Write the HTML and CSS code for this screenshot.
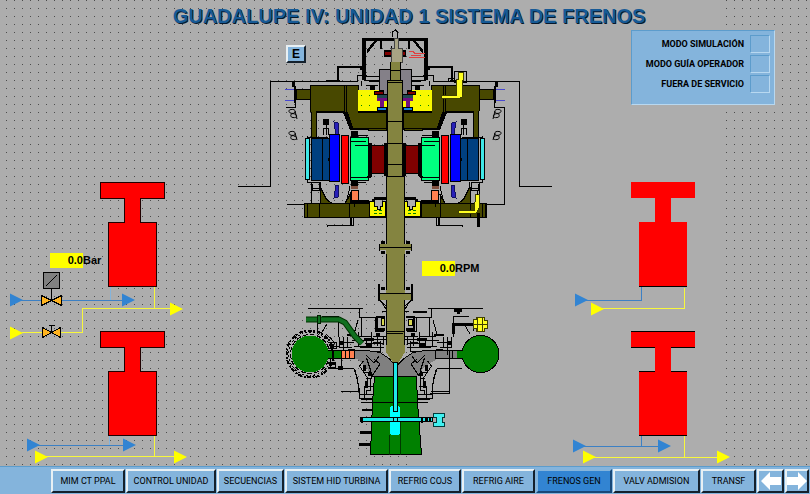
FILE: index.html
```html
<!DOCTYPE html>
<html lang="es">
<head>
<meta charset="utf-8">
<title>Guadalupe IV: Sistema de frenos</title>
<link rel="stylesheet" href="styles.css">
</head>
<body>
<main class="canvas">
  <svg class="mimic" viewBox="0 0 810 466" shape-rendering="crispEdges" aria-hidden="true">
    <defs>
      <pattern id="dots" width="8" height="8" patternUnits="userSpaceOnUse">
        <rect x="6" width="1" height="1" fill="#4c4c4c"/>
      </pattern>

      <!-- Left half of the generator; mirrored for the right half -->
      <g id="generator">
        <path class="thin" d="M238 186.500h32.500v-105h75M337 81.500h20v-6h10"/>
        <path d="M362 38h34v3h-30v39h-4zM337 66h25v4h-2v-2h-21v13h-2zM326 80h14v2h-14zM377 41l-10 13v-4l7-9z"/>
        <path d="M380 41h2v8h-2zM384 50h8v7h-8z"/>
        <path fill="#800000" d="M385 52h6v3h-6z"/>
        <path class="thin" d="M362 76.500h17v4h-15M391.500 46v15M361 81v5M369 81.500h10v8M366 85.500h12"/>
        <path d="M370 86h5v4h-5z"/>
        <path class="body" d="M296.500 89.500h14v10h-14zM310.500 85.500h48v26h28v17h-36l-6-16h-28v25h-5z"/>
        <path class="thin" d="M344.500 85v27M346.500 85v27M316 111.500h27l7 17M316.500 112v26"/>
        <path d="M345 112h3l5 16h34v2h-37z"/>
        <path class="body" stroke="none" d="M368 128h18v2h-18z"/>
        <path fill="#f8f800" d="M358 90h30v21h-30z"/>
        <path d="M358 111h30v2h-30zM292 82h3v5h-3zM294 86h2v17h-2z"/>
        <path fill="#008000" d="M361 95h1v1h-1zM369 95h1v1h-1zM361 105h1v1h-1zM369 105h1v1h-1z"/>
        <path class="violet" d="M285 89.500h9M285 100.500h9"/>
        <path class="thin" d="M295.500 102v5h-10"/>
        <path fill="#800000" stroke="#000" d="M374.500 91.500h13v3h-13z"/>
        <path fill="#204850" d="M377 95h10v3h-10z"/>
        <path fill="#701080" d="M377 98h10v3h-3v6h-4v-6h-3z"/>
        <path fill="#1080e0" stroke="#000" d="M377.500 107.500h9v3h-9z"/>
        <path d="M323 119h6v6h-6zM326 125h1v10h-1z"/>
        <path class="thin" d="M323.500 135v-7h5v7"/>
        <path class="fin" d="M334 122l4 1 1 12h-3zM334 198l4-1 1-12h-3z"/>
        <path class="thin" shape-rendering="auto" d="M291 109.500c5-1 6 4 1 4 6 0 6 5 1 4-3 0-3-4 0-4-5 0-5-4-2-4zM291 131.500c5-1 6 4 1 4 6 0 6 5 1 4-3 0-3-4 0-4-5 0-5-4-2-4zM295 111l2 8M295 133l2 7"/>
        <path class="thin" d="M307.500 136v46h10M308 137.500h20"/>
        <path fill="#40e8e8" stroke="#000" d="M305.500 138.500h4v41h-4z"/>
        <path fill="#004080" stroke="#000" d="M311.500 138.500h11v42h-11zM322.500 138.500h7v42h-7z"/>
        <path fill="#0000ff" stroke="#000" d="M329.500 134.500h10v47h-10z"/>
        <path fill="#ff0000" stroke="#000" d="M341.500 135.500h7v48h-7z"/>
        <path fill="#00ff80" stroke="#000" d="M350.500 137.500h18v43h-18z"/>
        <path class="thin" d="M350 141.500h16M355 145.500h13M351 177.500h16M352 135.500h16M352 182.500h14"/>
        <path d="M351 131h7v6h-7zM368 143h4v33l-2 2h-3v-2h1zM351 181h7v5h-7z"/>
        <path fill="#800000" stroke="#000" d="M371.500 145.500h14v28h-14z"/>
        <path d="M384 143h3v33h-3zM328 158h2v3h-2z"/>
        <path class="thin" d="M307 182.500h12v8h-7v-7M311 183v21l-6 1M312 188.500h8M350 186l-3 14v4M320 182l1 21"/>
        <path class="body" stroke="none" d="M320 187l6 12 5 4h14l5-9v9h19v14h-65v-14h16z"/>
        <path class="thin" d="M320.500 187l6 12 5 4h14l5-9M304 203.500h46M304 217.500h82M304.500 203v14M307.500 203v14M319.500 203v14M349.500 203v14M287 204.500h17"/>
        <path fill="#805040" d="M351 186h7v3h-7z"/>
        <path fill="#ff8050" stroke="#000" d="M351.500 190.500h7v10h-7z"/>
        <path d="M351 200h18v3h-18zM354 200h1v7h-1zM374 197h12v3h-12zM372 199h3v4h-3z"/>
        <path fill="#f8f800" stroke="#000" d="M369.500 201.500h16v15h-16z"/>
        <path fill="#adadad" stroke="#000" d="M374.500 201v5h3v3h3v-3h2v-5"/>
        <path fill="#008000" d="M374 210h3v1h-3zM374 213h3v1h-3zM379 210h3v1h-3zM379 213h3v1h-3z"/>
        <path d="M350 217h2v8h-2z"/>
        <path class="thin" d="M353.500 218v7h-26v2"/>
      </g>

      <!-- Linework around the runner, left half -->
      <g id="casing">
        <path class="thin" d="M308 308.500h55M359.500 309v8h16M361.500 317v20M378.500 284v16l8 6v10M380.500 300l6 10M382 311.500h5M377 317h-2v14h9M373 336.500h13M368 339.500h18M371.500 332v15M377.500 334v12M380.500 341v10h-9M383.500 337v8M355 336.500h16M358.500 332v14M352 340.500h14v6h-12M360 347.500h24M365 343.500h18M317.500 320v11M327 324l-6 10M322 316.500h16v20M358 320l-4 14M339.500 337v10h12M343.500 337v18M347.500 337v11M342 342.500h12"/>
        <path d="M379 284h1v16h-1zM376 316h9v2h-7v10h7v3h-9zM364 338h10v3h-10zM376 333h4v3h-4zM366 344h5v4h-5zM373 342h8v2h-8zM347 334h10v2h-10zM339 341h4v4h-4zM348 349h7v2h-7z"/>
        <path class="thin" d="M341.500 359v9h-12M341 368l13 1 3 8 2 14h-18M355 370l4 18v10h14M364.500 398v-12h8M363 372.500h8v6h-5M366.500 358l4 12-2 6M363.500 361l-4 5 8 12v8M359 394.500h14M374 359l6 5-8 12M366 355l8 8 5-7M370.500 378v12h-4v5"/>
        <path d="M361 398h12v2h-12zM365 381h3v7h-3zM363 365h3v6h-3zM368 373h4v3h-4z"/>
      </g>
      <g id="brake">
        <path d="M.5 .5h64v16h-24v24h16v64h-48v-64h16v-24h-24z"/>
      </g>
      <path id="arrow" shape-rendering="auto" d="M0-6.500L13 0 0 6.500z"/>
    </defs>

    <path fill="url(#dots)" d="M0 0h410v466h-410zM722 0h88v466h-88z"/>

    <use href="#generator"/>
    <use href="#generator" transform="translate(790 0) scale(-1 1)"/>
    <path class="thin" d="M495 107.500h9.500v97h-20M397.500 38v-6l-2-2-3 2v5"/>
    <path fill="none" stroke="#e04040" d="M409 51.500h4l2 2h10M409 57.500h16M411 55.500h10"/>
    <path class="thin" d="M454.500 71.500h12v11h-12zM448.500 82v-4h6"/>
    <path fill="#ffff20" stroke="#404000" d="M458.500 72.500h5v8h-1v16l-3 2h-18v-3h15v-16h2z"/>
    <path fill="#ffff20" stroke="#404000" d="M475.500 194.500h4v12l-3 7h-18v-3h16z"/>
    <path d="M477 190h1v5h-1zM477 213h3v14h-3z"/>

    <!-- Shaft -->
    <path fill="#848088" stroke="#000" d="M379.500 69.500h32v21h-4v4h-24v-4h-4z"/>
    <path fill="#a8a484" stroke="#444" d="M394 38h4v10h4v14h-11v-14h3z"/>
    <path fill="#848440" d="M390 62h11v18h2v96h2v68h6v6h-6v43h6v7h-6v52l-9 15-10-15v-52h-6v-7h6v-43h-6v-6h6v-68h1v-96h3z"/>
    <path class="thin" d="M390.500 62v18h-3v96h-1.500M400.500 62v18h2v96h2v68M386 176.500h18M386 244v-67M386.500 254v36M404.500 254v36M388 80.500h14M388 82.500h14M390 70.500h10M387 121.500h16M387 143.500h16M387 164.500h16M380 247.500h31M380 293.500h31M386 331.500h18M387 333.500h16M386.500 300v51M404.500 300v51"/>
    <path d="M381 241h4v3h-4zM406 241h4v3h-4zM381 251h4v3h-4zM406 251h4v3h-4zM381 287h4v3h-4zM406 287h4v3h-4z"/>
    <path class="thin" d="M379.500 244v7M411.500 244v7"/>

    <!-- Spiral case and guide vanes -->
    <path fill="#808080" d="M354 350h12l14 2 9 6 7 8 8-8 9-6 12-2h33v8h-19l-14 8-8 11h-44l-8-11-8-7h-3z"/>
    <path fill="#848440" d="M386 345h19v7l-9 15-10-15z"/>
    <use href="#casing"/>
    <use href="#casing" transform="translate(791 0) scale(-1 1)"/>
    <path class="thin" d="M354 350.500h12l14 2 9 6 7 8 8-8 9-6 12-2h33M435.500 350v8h22M449.500 350v43h-20M452.500 350v8M372 376.500h45"/>
    <path fill="#008000" d="M322 351h19v7h-19zM457 351h12v7h-12z"/>
    <path class="thin" d="M322 350.500h20M322 358.500h20M457 350.500h10M457 358.500h10"/>
    <path fill="#ff8050" stroke="#000" d="M341.500 350.500h4v8h-4zM345.500 350.500h4v8h-4zM349.500 350.500h5v8h-5z"/>
    <g fill="none" stroke="#000">
      <circle cx="310" cy="354" r="19.500" stroke-dasharray="5 2"/>
      <circle cx="310" cy="354" r="21.500" stroke-dasharray="2 2"/>
      <circle cx="310" cy="354" r="23.500" stroke-width="2" stroke-dasharray="4 1 2 2"/>
      <path d="M326 334l6 6M330 337l5 7M328 342h8v6h-7M331 346h9M327 361l4 6h5M330 360v8M335 362v5"/>
    </g>
    <path d="M338 366h5v4h-5zM330 344h4v4h-4zM331 362h4v3h-4z"/>
    <circle cx="310" cy="354" r="18.500" fill="#008000"/>
    <circle cx="480.500" cy="354" r="18.500" fill="#008000" stroke="#000"/>
    <path fill="#008000" d="M322 351h10v7h-10zM458 351h10v7h-10z"/>
    <path shape-rendering="auto" fill="none" stroke="#003000" stroke-width="6" d="M306 319.500h33l6 3 10 14 7 7"/>
    <path shape-rendering="auto" fill="none" stroke="#107020" stroke-width="4" d="M306 319.500h33l6 3 10 14 7 7"/>
    <path fill="#107020" stroke="#002000" d="M317.500 315.500h3v8h-3z"/>
    <path fill="#d8d850" stroke="#000" d="M381.500 318.500h3v7h-3zM408.500 319.500h4v6h-4z"/>
    <path d="M452 323h21v3h-18v8h-3zM413 311h14v2h-14zM454 309h8v3h-2v2h-3v-2h-3z"/>
    <path fill="#ffff20" stroke="#404000" d="M473.500 319.500h3v-2h8v3h3v8h-3v3h-8v-3h-3z"/>
    <path fill="none" stroke="#404000" d="M477.500 318v13M482.500 318v13M474 324.500h13"/>

    <!-- Draft tube -->
    <path fill="#008000" stroke="#000" d="M374.500 376.500h42l1 26 4 52h-51l2-52z"/>
    <path fill="none" stroke="#003800" d="M389.500 435v20M400.500 420v35"/>
    <path class="thin" d="M372 402.500h47M361 402.500h12M417 402.500h11"/>
    <path d="M362 409h11v2h-11zM360 431h12v3h-12zM359 443h12v3h-12z"/>
    <rect x="390" y="406" width="10" height="29" rx="3" fill="#00ffff"/>
    <path fill="#20e8e8" stroke="#000" d="M393.500 362.500h4v49h-4zM360.500 417.500h72v4h-72z"/>
    <path fill="#40f0f0" stroke="#003c3c" d="M433.500 413.500h11v4h-2v5h2v4h-11v-4h3v-5h-3z"/>
    <circle cx="395.500" cy="419.500" r="2" fill="#20e8e8" stroke="#000"/>
    <path d="M361 417h2v6h-2zM421 417h2v6h-2zM425 418h3v3h-3zM429 418h2v3h-2z"/>

    <!-- Brake pipework -->
    <g fill="none" stroke="#3c80c4">
      <path d="M20 300.500h104M38 445.500h87M586 300.500h55.500v-14M584 446.500h76M641.500 436v10"/>
      <path stroke="#84b4dc" d="M110.500 287v13M109.500 436v9"/>
    </g>
    <path fill="none" stroke="#f8f83c" d="M22 332.500h60.500v-24h89M154.500 287v21M46 456.500h130M154.500 436v20M602 308.500h82.500v-21M594 457.500h124M684.500 436v21"/>
    <g fill="#3284d2">
      <use href="#arrow" x="10" y="300"/><use href="#arrow" x="122" y="300"/>
      <use href="#arrow" x="27" y="445"/><use href="#arrow" x="123" y="445"/>
      <use href="#arrow" x="575" y="300"/>
      <use href="#arrow" x="573" y="446"/><use href="#arrow" x="658" y="446"/>
    </g>
    <g fill="#ffff00">
      <use href="#arrow" x="10" y="333"/><use href="#arrow" x="170" y="309"/>
      <use href="#arrow" x="35" y="457"/><use href="#arrow" x="174" y="457"/>
      <use href="#arrow" x="591" y="309"/>
      <use href="#arrow" x="583" y="457"/><use href="#arrow" x="717" y="457"/>
    </g>
    <g stroke="#000">
      <path fill="#808080" d="M43.500 272.500h16v16h-16zM46 286l11-11"/>
      <path fill="none" d="M51.500 289v11M51.500 326v6M49 325.500h6"/>
      <path fill="#ffb420" d="M41.500 295.500v10l10-5 10 5v-10l-10 5zM42.500 327.500v10l9-5 9 5v-10l-9 5z"/>
    </g>
    <g fill="#ff0000" stroke="#200000">
      <use href="#brake" x="100" y="182"/>
      <use href="#brake" x="100" y="331"/>
    </g>
    <g fill="#ff0000">
      <use href="#brake" x="630.500" y="181.500"/>
      <use href="#brake" x="630.500" y="331"/>
    </g>
    <path class="thin" d="M639 286.500h48M631 331.500h64M631 347.500h24M671 347.500h24M639 371.500h16M671 371.500h16M639 435.500h48"/>
  </svg>

  <div class="overlay">
    <h1 class="title">GUADALUPE IV: UNIDAD 1 SISTEMA DE FRENOS</h1>
    <div class="top-row">
      <button class="btn btn-e" type="button">E</button>
      <ul class="modes">
        <li>MODO SIMULACIÓN<span class="lamp"></span></li>
        <li>MODO GUÍA OPERADOR<span class="lamp"></span></li>
        <li>FUERA DE SERVICIO<span class="lamp"></span></li>
      </ul>
    </div>
  </div>
  <div class="reading reading-pressure"><output>0.0</output>Bar</div>
  <div class="reading reading-speed"><output>0.0</output>RPM</div>
</main>

<nav class="navbar">
  <button class="btn tab" type="button">MIM CT PPAL</button>
  <button class="btn tab" type="button">CONTROL UNIDAD</button>
  <button class="btn tab" type="button">SECUENCIAS</button>
  <button class="btn tab" type="button">SISTEM HID TURBINA</button>
  <button class="btn tab" type="button">REFRIG COJS</button>
  <button class="btn tab" type="button">REFRIG AIRE</button>
  <button class="btn tab tab-active" type="button" aria-current="page">FRENOS GEN</button>
  <button class="btn tab" type="button">VALV ADMISION</button>
  <button class="btn tab" type="button">TRANSF</button>
  <button class="btn tab" type="button" aria-label="Anterior"><svg class="arrow" viewBox="0 0 20 18"><path d="M0 9L9 0v5h11v8H9v5z"/></svg></button>
  <button class="btn tab" type="button" aria-label="Siguiente"><svg class="arrow" viewBox="0 0 20 18"><path d="M20 9L11 0v5H0v8h11v5z"/></svg></button>
</nav>
</body>
</html>
```
FILE: styles.css
```css
* {
  box-sizing: border-box;
}

body {
  margin: 0;
  min-height: 100vh;
  display: flex;
  flex-direction: column;
  background: #adadad;
  color: #000;
  font-family: "Liberation Sans", Arial, sans-serif;
}

.canvas {
  position: relative;
  display: grid;
  width: 100%;
  aspect-ratio: 810 / 466;
}

.mimic,
.overlay {
  grid-area: 1 / 1;
  width: 100%;
}

.mimic {
  display: block;
  height: 100%;
}

.overlay {
  position: relative;
}

.thin {
  fill: none;
  stroke: #000;
}

.body {
  fill: #484800;
  stroke: #000;
}

.violet {
  fill: none;
  stroke: #4848d0;
}

.fin {
  fill: #2820b8;
  stroke: #101060;
}

.title {
  margin: 0;
  padding: 4px 0 0 8px;
  height: 30px;
  font-size: 20px;
  line-height: 24px;
  text-align: center;
  color: #165a96;
  text-shadow: 1px 1px 0 #06182c;
}

.top-row {
  display: flex;
  justify-content: space-between;
  align-items: flex-start;
  padding: 0 35px 0 35.300%;
}

.btn {
  margin: 0;
  padding: 0;
  border: 2px solid;
  border-color: #e8f0f4 #14202c #14202c #e8f0f4;
  background: #84b4dc;
  color: #000;
  font-family: inherit;
}

.btn-e {
  width: 20px;
  height: 18px;
  margin-top: 15px;
  font-size: 12px;
  font-weight: bold;
  line-height: 14px;
}

.modes {
  margin: 0;
  padding: 3px 4px 10px 14px;
  list-style: none;
  background: #84b4dc;
  border: 1px solid;
  border-color: #5c9ccc #b8d8f0 #b8d8f0 #5c9ccc;
  font-family: Roboto, "Noto Sans", sans-serif;
  font-size: 9px;
  font-weight: bold;
}

.modes li {
  display: flex;
  align-items: center;
  justify-content: flex-end;
  gap: 6px;
  height: 20px;
}

.lamp {
  width: 20px;
  height: 18px;
  border: 1px solid;
  border-color: #5c9ccc #b8d8f0 #b8d8f0 #5c9ccc;
}

.reading {
  position: absolute;
  display: flex;
  align-items: center;
  height: 15px;
  font-size: 11px;
  font-weight: bold;
  line-height: 15px;
}

.reading output {
  width: 33px;
  background: #ffff00;
  text-align: right;
}

.reading-pressure {
  left: 6.170%;
  top: 54.200%;
}

.reading-speed {
  left: 52.100%;
  top: 56%;
}

.navbar {
  flex: 1;
  display: grid;
  grid-template-columns: 51fr 75fr 91fr 68fr 104fr 73fr 74fr 77fr 88fr 56fr 28fr 25fr;
  align-items: start;
  padding-top: 2px;
  min-height: 28px;
  background: #84b4dc;
  border-top: 1px solid #5c9ccc;
}

.tab {
  min-width: 0;
  height: 24px;
  margin-right: 1px;
  overflow: hidden;
  font-family: Roboto, sans-serif;
  font-size: 9px;
  line-height: 20px;
  white-space: nowrap;
}

.tab:first-child {
  grid-column: 2;
}

.tab-active {
  background: #3284d2;
  border-color: #84b4dc #184878 #184878 #84b4dc;
}

.arrow {
  display: block;
  width: 20px;
  height: 18px;
  margin: auto;
  fill: #fff;
}
```
